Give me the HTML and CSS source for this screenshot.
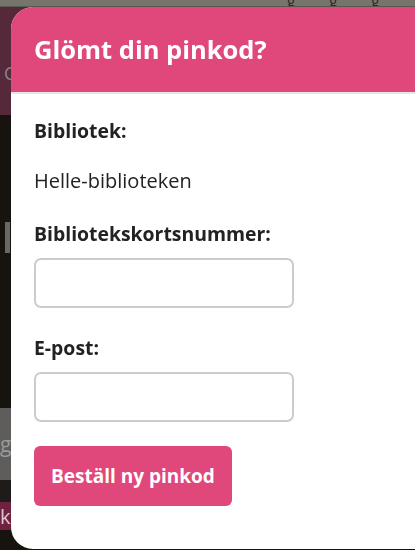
FILE: index.html
```html
<!DOCTYPE html>
<html lang="sv">
<head>
<meta charset="utf-8">
<title>Glömt din pinkod?</title>
<link rel="stylesheet" href="styles.css">
</head>
<body>
<div class="page">
  <div class="topbar">
    <span class="topbar-glyph">g</span>
    <span class="topbar-glyph">g</span>
    <span class="topbar-glyph">g</span>
  </div>
  <div class="hero"><span class="hero-text">C</span></div>
  <div class="dark">
    <div class="slider-bar"></div>
  </div>
  <div class="info"><span class="info-text">g: 10–19</span></div>
  <div class="dark-small"></div>
  <div class="tag"><span class="tag-text">kultur</span></div>
  <div class="dark-end"></div>
</div>

<div class="modal" role="dialog" aria-labelledby="modal-title">
  <header class="modal-header">
    <h2 id="modal-title" class="modal-title">Glömt din pinkod?</h2>
  </header>
  <form class="modal-body">
    <div class="field field-static">
      <span class="label">Bibliotek:</span>
      <span class="value">Helle-biblioteken</span>
    </div>
    <div class="field">
      <label class="label" for="card">Bibliotekskortsnummer:</label>
      <input class="input" id="card" type="text">
    </div>
    <div class="field">
      <label class="label" for="email">E-post:</label>
      <input class="input" id="email" type="email">
    </div>
    <button class="btn" type="button">Beställ ny pinkod</button>
  </form>
</div>
</body>
</html>
```
FILE: styles.css
```css
html, body {
  margin: 0;
  padding: 0;
  height: 100%;
}
body {
  background: #17130f;
  font-family: "Open Sans", "Noto Sans", sans-serif;
  overflow: hidden;
}
.page {
  display: flex;
  flex-direction: column;
  height: 100%;
}
.topbar {
  flex: 0 0 7px;
  background: #77746b;
  border-bottom: 1px solid #5a5852;
  overflow: hidden;
  display: flex;
  align-items: flex-end;
  gap: 34px;
  padding-left: 287px;
  box-sizing: border-box;
}
.topbar-glyph {
  font-size: 15px;
  line-height: 15px;
  color: #2a2a2a;
  margin-bottom: -2px;
}
.hero {
  flex: 0 0 108px;
  background: #55283a;
  padding: 56px 0 0 4px;
  box-sizing: border-box;
}
.hero-text {
  font-size: 18px;
  line-height: 18px;
  color: #8c8490;
}
.dark {
  flex: 1;
  background: #17130f;
  padding-top: 107px;
  padding-left: 5px;
  box-sizing: border-box;
}
.slider-bar {
  width: 5px;
  height: 31px;
  background: #6a6866;
}
.info {
  flex: 0 0 72px;
  background: #5e5d5b;
  display: flex;
  align-items: center;
  padding-left: 0;
  box-sizing: border-box;
}
.info-text {
  font-size: 21px;
  color: #9a9a9a;
  white-space: nowrap;
}
.dark-small {
  flex: 0 0 22px;
  background: #1e1b19;
}
.tag {
  flex: 0 0 28px;
  background: #6e2140;
  display: flex;
  align-items: center;
}
.tag-text {
  font-size: 20px;
  color: #d8c8d0;
  white-space: nowrap;
}
.dark-end {
  flex: 0 0 20px;
  background: #17130f;
}

.modal {
  position: fixed;
  left: 11px;
  top: 7px;
  width: 430px;
  height: 542px;
  background: #fff;
  border-radius: 22px;
  overflow: hidden;
  display: flex;
  flex-direction: column;
}
.modal-header {
  height: 85px;
  background: #e0477b;
  border-bottom: 2px solid #e6e6e6;
  display: flex;
  align-items: center;
  padding: 0 23px;
  box-sizing: content-box;
}
.modal-title {
  margin: 0;
  color: #fff;
  font-size: 25.5px;
  font-weight: 700;
  line-height: 1;
}
.modal-body {
  padding: 24px 23px 0;
  display: flex;
  flex-direction: column;
  align-items: flex-start;
  color: #222;
}
.field {
  display: flex;
  flex-direction: column;
  align-items: flex-start;
  gap: 11px;
  margin-bottom: 27px;
}
.field-static {
  gap: 24px;
}
.label {
  font-size: 19.4px;
  font-weight: 700;
  line-height: 26px;
}
.value {
  font-size: 20px;
  line-height: 26px;
}
.input {
  width: 260px;
  height: 50px;
  box-sizing: border-box;
  border: 2px solid #cccccc;
  border-radius: 7px;
  background: #fff;
  font: inherit;
  padding: 6px 10px;
  margin: 0;
}
.field + .field + .field {
  margin-bottom: 24px;
}
.btn {
  width: 198px;
  height: 60px;
  background: #e0477b;
  color: #fff;
  border: none;
  border-radius: 6px;
  font-family: inherit;
  font-size: 19px;
  font-weight: 700;
  padding: 0;
}
```
